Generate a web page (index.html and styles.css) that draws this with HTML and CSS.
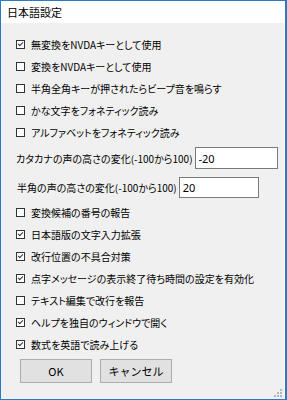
FILE: index.html
```html
<!DOCTYPE html>
<html lang="ja">
<head>
    <meta charset="UTF-8">
    <meta name="viewport" content="width=device-width, initial-scale=1.0">
    <title>日本語設定</title>
    <link rel="stylesheet" href="styles.css">
</head>
<body>

<div class="window">
    <div class="titlebar">日本語設定</div>
    <div class="client">
        <label class="check"><span class="box on"></span>無変換をNVDAキーとして使用</label>
        <label class="check"><span class="box"></span>変換をNVDAキーとして使用</label>
        <label class="check"><span class="box"></span>半角全角キーが押されたらビープ音を鳴らす</label>
        <label class="check"><span class="box"></span>かな文字をフォネティック読み</label>
        <label class="check"><span class="box"></span>アルファベットをフォネティック読み</label>

        <div class="field first">
            <span class="field-label">カタカナの声の高さの変化(-100から100)</span>
            <input class="edit wide" type="text" value="-20">
        </div>
        <div class="field second">
            <span class="field-label">半角の声の高さの変化(-100から100)</span>
            <input class="edit" type="text" value="20">
        </div>

        <label class="check after-fields"><span class="box"></span>変換候補の番号の報告</label>
        <label class="check"><span class="box on"></span>日本語版の文字入力拡張</label>
        <label class="check"><span class="box on"></span>改行位置の不具合対策</label>
        <label class="check"><span class="box on"></span>点字メッセージの表示終了待ち時間の設定を有効化</label>
        <label class="check"><span class="box"></span>テキスト編集で改行を報告</label>
        <label class="check"><span class="box on"></span>ヘルプを独自のウィンドウで開く</label>
        <label class="check"><span class="box on"></span>数式を英語で読み上げる</label>

        <div class="buttons">
            <button class="btn">OK</button>
            <button class="btn">キャンセル</button>
        </div>

        <svg class="grip" width="8" height="8" viewBox="0 0 8 8">
            <rect x="6" y="0" width="2" height="2" fill="#b5b5b5"/>
            <rect x="3" y="3" width="2" height="2" fill="#b5b5b5"/>
            <rect x="6" y="3" width="2" height="2" fill="#b5b5b5"/>
            <rect x="0" y="6" width="2" height="2" fill="#b5b5b5"/>
            <rect x="3" y="6" width="2" height="2" fill="#b5b5b5"/>
            <rect x="6" y="6" width="2" height="2" fill="#b5b5b5"/>
        </svg>
    </div>
</div>

</body>
</html>
```

FILE: styles.css
```css
body {
    margin: 0;
    font-family: "Noto Sans CJK JP", "Noto Sans", sans-serif;
    font-feature-settings: "palt";
    color: #000;
}
.window {
    width: 287px;
    height: 400px;
    box-sizing: border-box;
    border: 1px solid #2b79c2;
    border-right-width: 2px;
    display: flex;
    flex-direction: column;
    background: #fff;
}
.titlebar {
    height: 22px;
    line-height: 22px;
    padding-left: 6px;
    font-size: 11px;
    background: #fff;
}
.client {
    flex: 1;
    position: relative;
    background: #f0f0f0;
    margin-right: 1px;
    padding: 10px 0 0 15px;
    display: flex;
    flex-direction: column;
    font-size: 10px;
}
.check {
    height: 22px;
    display: flex;
    align-items: center;
}
.box {
    width: 7px;
    height: 7px;
    border: 1px solid #333;
    background: #fff;
    margin-right: 6px;
    position: relative;
}
.box.on::after {
    content: "";
    position: absolute;
    left: 1px;
    top: 0;
    width: 4px;
    height: 2px;
    border-left: 1px solid #333;
    border-bottom: 1px solid #333;
    transform: translate(0, 1px) rotate(-45deg);
    transform-origin: center;
}
.field {
    display: flex;
    align-items: center;
    height: 22px;
}
.field.first {
    margin-top: 4px;
}
.field.second {
    margin-top: 7px;
    padding-left: 1px;
}
.field-label {
    white-space: nowrap;
}
.edit {
    margin-left: 2px;
    width: 80px;
    height: 21px;
    box-sizing: border-box;
    border: 1px solid #7a7a7a;
    background: #fff;
    padding: 0 3px;
    font-family: "Noto Sans", sans-serif;
    font-size: 11px;
    outline: none;
}
.edit.wide {
    width: 83px;
    height: 22px;
}
.after-fields {
    margin-top: 3px;
}
.buttons {
    display: flex;
    gap: 8px;
    margin-top: 4px;
    padding-left: 4px;
}
.btn {
    width: 72px;
    height: 24px;
    border: 1px solid #adadad;
    background: #e1e1e1;
    font-family: "Noto Sans CJK JP", "Noto Sans", sans-serif;
    font-size: 11px;
    padding: 0;
}
.grip {
    position: absolute;
    right: 2px;
    bottom: 2px;
}
```
